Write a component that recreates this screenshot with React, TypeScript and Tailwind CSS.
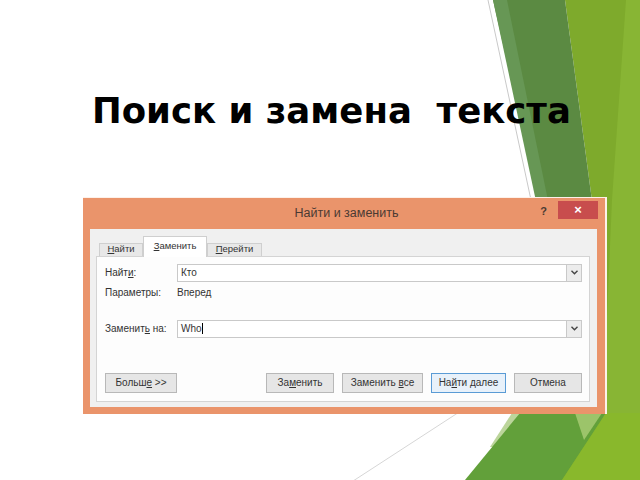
import React from "react";

const Btn = ({ children, w, focus }: { children: React.ReactNode; w: string; focus?: boolean }) => (
  <div
    className={`${w} h-[20px] flex items-center justify-center border text-[10px] text-[#333] ${
      focus ? "border-[#5a9bd5] bg-[#e8f1fa]" : "border-[#b8b8b8] bg-[#e6e6e6]"
    }`}
  >
    {children}
  </div>
);

const Combo = ({ children }: { children: React.ReactNode }) => (
  <div className="flex-1 h-[18px] flex items-center border border-[#c9c9c9] bg-white pl-[3px] text-[10px] text-[#333]">
    <div className="flex-1 flex items-center">{children}</div>
    <div className="w-[15px] h-[16px] flex items-center justify-center border-l border-[#c9c9c9] bg-[#ececec]">
      <svg width="7" height="5" viewBox="0 0 7 5">
        <path d="M0.5 0.8 L3.5 3.8 L6.5 0.8" stroke="#444" strokeWidth="1.4" fill="none" />
      </svg>
    </div>
  </div>
);

export default function App() {
  return (
    <div className="relative w-[640px] h-[480px] overflow-hidden bg-white" style={{ fontFamily: '"Liberation Sans", Arial, sans-serif' }}>
      <svg className="absolute inset-0" width="640" height="480" viewBox="0 0 640 480">
        <polygon points="565,0 640,0 640,480 540,480 600,260" fill="#7eaa2c" />
        <polygon points="626,0 640,0 640,480 600,480 612,200" fill="#88b534" />
        <polygon points="493,0 565,0 600,260 552,260" fill="#5b8a42" />
        <polygon points="493,0 507,0 552,220 540,220" fill="#679755" />
        <line x1="488" y1="0" x2="531" y2="200" stroke="#c9c9c9" strokeWidth="1" />
        <line x1="330" y1="496" x2="470" y2="405" stroke="#d6d6d6" strokeWidth="1" />
        <polygon points="490,447 512,413 526,413 497,447" fill="#bcd59b" />
        <polygon points="465,480 520,413 606,413 562,480" fill="#62a03a" />
        <polygon points="575,413 602,413 584,440" fill="#9cc46a" />
        <polygon points="562,480 606,413 640,413 640,480" fill="#89b82c" />
      </svg>

      <div className="relative">
        <div
          className="mt-[93px] pl-[92px] text-[35.5px] leading-none font-bold text-black whitespace-pre"
          style={{ fontFamily: '"DejaVu Sans", sans-serif' }}
        >
          Поиск и замена  текста
        </div>

        <div className="mt-[68px] ml-[83px] w-[524px] h-[217px] flex flex-col bg-[#ea946b] border-t border-r-2 border-[#fdf1ea] pl-[7px] pr-[8px] pb-[7px]">
          <div className="h-[31px] flex items-center relative">
            <div className="flex-1 text-center text-[12.5px] text-[#4a3a33] pl-[6px]">Найти и заменить</div>
            <div className="absolute right-[50px] top-[5px] text-[11px] font-bold text-[#4a3a33]">?</div>
            <div className="absolute right-[-1px] top-[3px] w-[40px] h-[18px] bg-[#c84d4d] flex items-center justify-center text-white text-[13px] font-bold">
              ×
            </div>
          </div>

          <div className="flex-1 bg-[#f0f0f0] flex flex-col pl-[6px] pr-[7px] pb-[5px]">
            <div className="flex items-end h-[27px] pl-[3px]">
              <div className="w-[44px] h-[13px] border border-b-0 border-[#cfcfcf] bg-[#e8e8e8] flex items-center justify-center text-[9.5px] text-[#333]">
                <span><u>Н</u>айти</span>
              </div>
              <div className="w-[64px] h-[21px] border border-b-0 border-[#cfcfcf] bg-white flex items-center justify-center text-[9.5px] text-[#333] -mb-px relative">
                <span><u>З</u>аменить</span>
              </div>
              <div className="w-[55px] h-[13px] border border-b-0 border-[#cfcfcf] bg-[#e8e8e8] flex items-center justify-center text-[9.5px] text-[#333]">
                <span><u>П</u>ерейти</span>
              </div>
            </div>

            <div className="flex-1 border border-[#d4d4d4] bg-[#fdfdfd] flex flex-col pl-[8px] pr-[7px] pt-[7px] text-[10px] text-[#333]">
              <div className="flex items-center">
                <div className="w-[72px]">Найт<u>и</u>:</div>
                <Combo>Кто</Combo>
              </div>
              <div className="flex items-center mt-[4px] h-[14px]">
                <div className="w-[72px]">Параметры:</div>
                <div>Вперед</div>
              </div>
              <div className="flex items-center mt-[20px]">
                <div className="w-[72px]">Заменит<u>ь</u> на:</div>
                <Combo>
                  <span>Who</span>
                  <span className="w-px h-[11px] bg-black" />
                </Combo>
              </div>
              <div className="flex items-center mt-[35px]">
                <Btn w="w-[72px]">
                  <span>Больш<u>е</u> &gt;&gt;</span>
                </Btn>
                <div className="flex-1" />
                <div className="flex gap-[8px]">
                  <Btn w="w-[68px]">
                    <span>За<u>м</u>енить</span>
                  </Btn>
                  <Btn w="w-[81px]">
                    <span>Заменить <u>в</u>се</span>
                  </Btn>
                  <Btn w="w-[75px]" focus>
                    <span>На<u>й</u>ти далее</span>
                  </Btn>
                  <Btn w="w-[68px]">
                    <span>Отмена</span>
                  </Btn>
                </div>
              </div>
            </div>
          </div>
        </div>
      </div>
    </div>
  );
}
